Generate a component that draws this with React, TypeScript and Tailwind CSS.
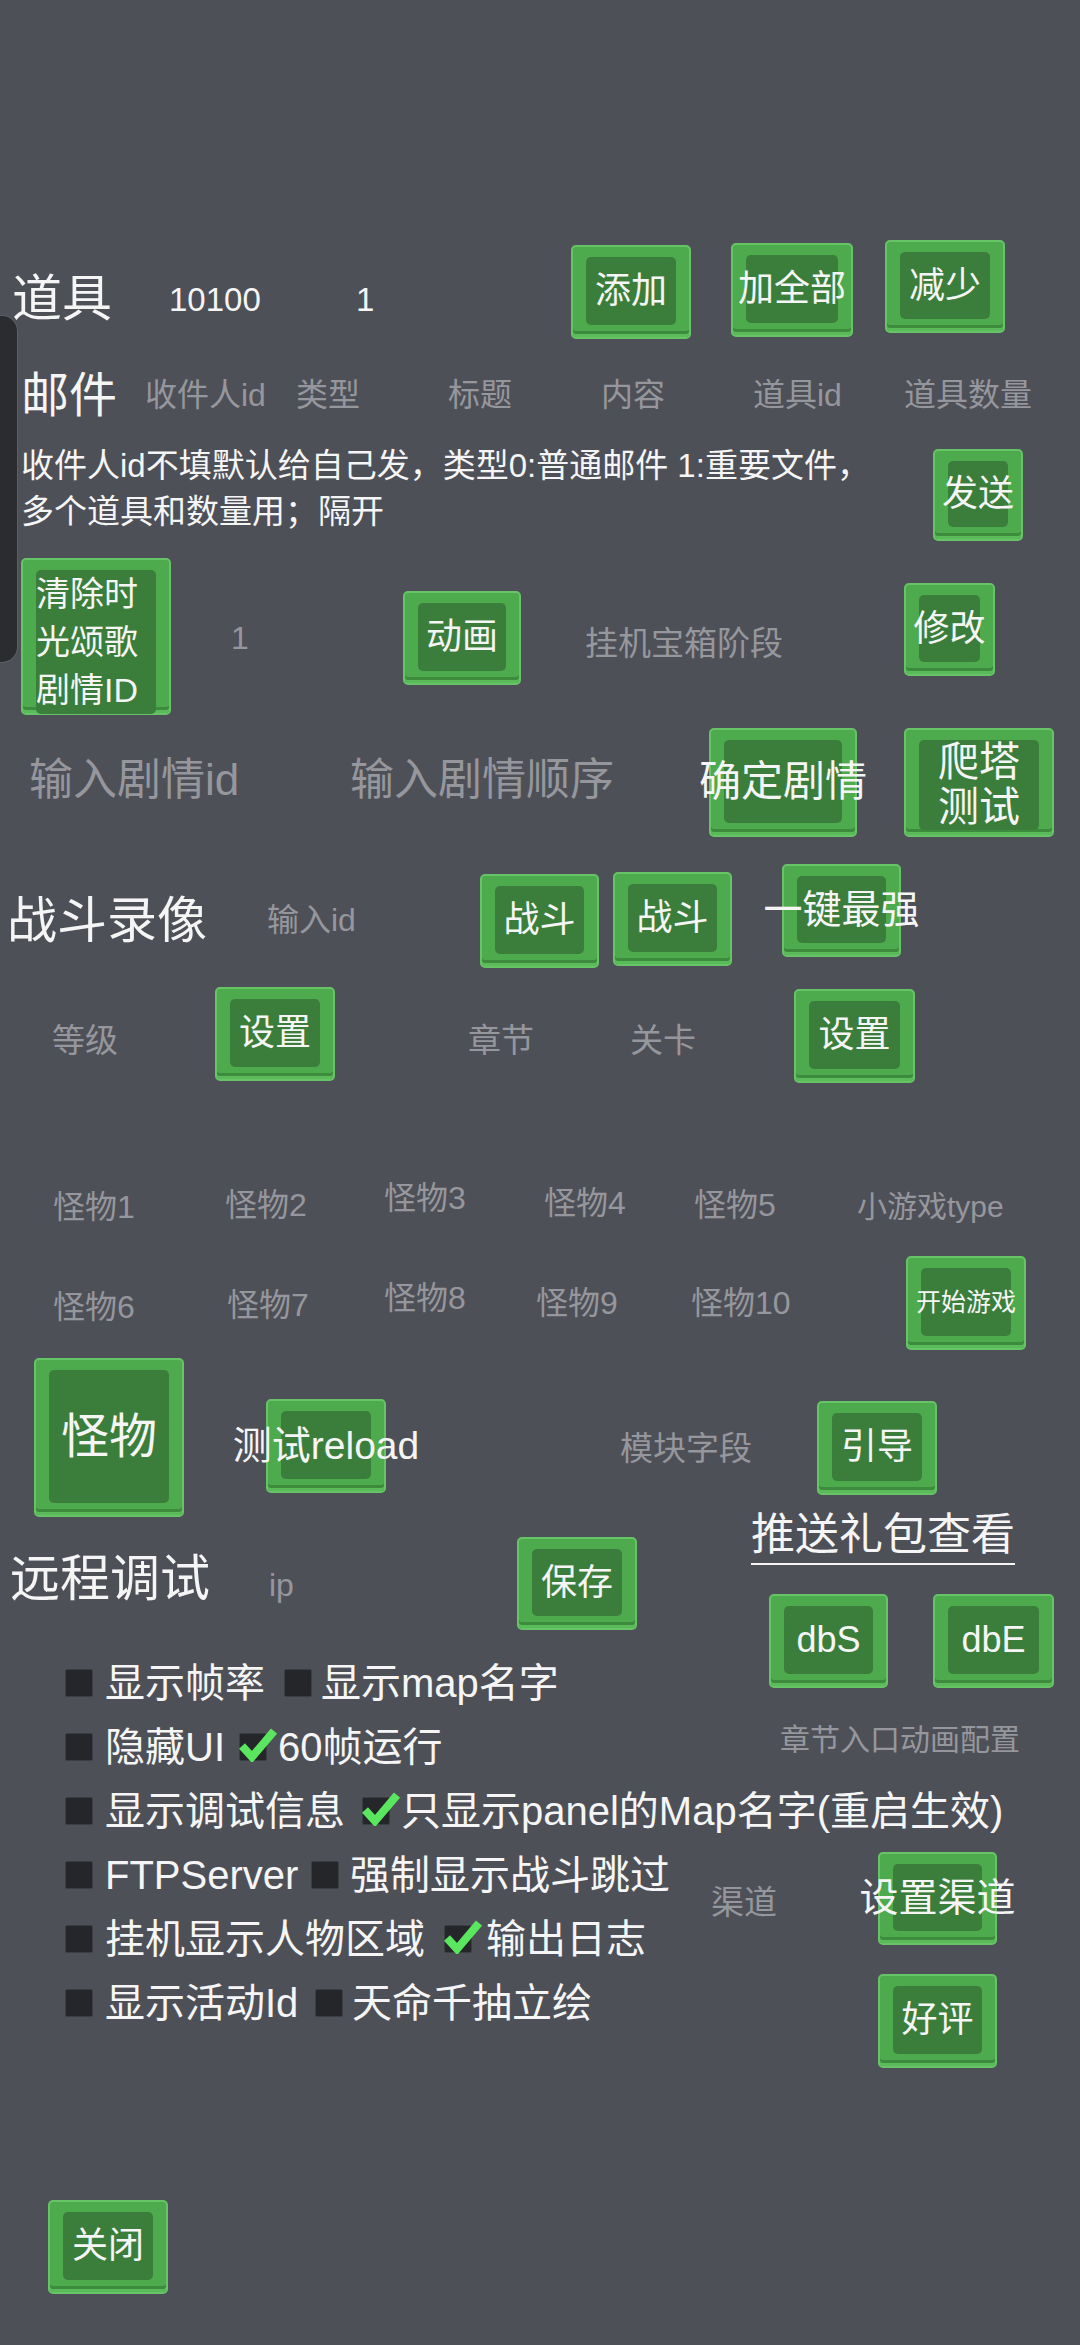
import React from "react";

type BtnProps = {
  className?: string;
  textClass?: string;
  children: React.ReactNode;
};

// green pixel-style game button
const Btn: React.FC<BtnProps> = ({ className = "", textClass = "text-[36px] justify-center", children }) => (
  <div
    className={`shrink-0 flex flex-col rounded-[5px] border-2 border-[#66c466] bg-[#4dab4d] pt-[10px] px-[13px] pb-[12px] shadow-[inset_0_-3px_0_#5bbb5b,inset_0_-6px_0_#3d8b3d] ${className}`}
  >
    <div
      className={`flex flex-1 items-center whitespace-nowrap rounded-[5px] bg-[#3b7e3b] leading-none text-[#f5f5f5] ${textClass}`}
    >
      {children}
    </div>
  </div>
);

const Box: React.FC<{ checked?: boolean }> = ({ checked }) => (
  <div className="relative h-[28px] w-[28px] shrink-0 rounded-[2px] border border-[#3d3e43] bg-[#25262a]">
    {checked && (
      <svg className="absolute left-[-1px] top-[-6px] h-[34px] w-[38px]" viewBox="0 0 38 34">
        <polyline points="3,18 13,29 35,3" fill="none" stroke="#5ae65e" strokeWidth="8" />
      </svg>
    )}
  </div>
);

const gray = "text-[#96979c]";

export default function App() {
  return (
    <div className="relative min-h-[2345px] w-[1080px] overflow-hidden bg-[#4e5058] pt-[238px] text-[#f5f5f5] [font-family:'Liberation_Sans','Noto_Sans_CJK_SC',sans-serif]">
      {/* floating handle on the left edge */}
      <div className="absolute left-0 top-[315px] h-[348px] w-[18px] rounded-r-[16px] border border-l-0 border-[#5d5f66] bg-[#2b2c30]" />

      {/* 道具 */}
      <div className="flex h-[102px] items-start leading-none">
        <div className="ml-[12px] mt-[36px] w-[157px] shrink-0 text-[50px]">道具</div>
        <div className="mt-[45px] w-[187px] shrink-0 text-[33px]">10100</div>
        <div className="mt-[45px] w-[215px] shrink-0 text-[33px]">1</div>
        <Btn className="mt-[7px] h-[94px] w-[120px]">添加</Btn>
        <Btn className="ml-[40px] mt-[5px] h-[94px] w-[122px]">加全部</Btn>
        <Btn className="ml-[32px] mt-[2px] h-[93px] w-[120px]">减少</Btn>
      </div>

      {/* 邮件 */}
      <div className={`flex h-[90px] items-start leading-none text-[32px] ${gray}`}>
        <div className="ml-[21px] mt-[32px] w-[124px] shrink-0 text-[48px] text-[#f5f5f5]">邮件</div>
        <div className="mt-[39px] w-[151px] shrink-0">收件人id</div>
        <div className="mt-[39px] w-[152px] shrink-0">类型</div>
        <div className="mt-[39px] w-[153px] shrink-0">标题</div>
        <div className="mt-[39px] w-[152px] shrink-0">内容</div>
        <div className="mt-[39px] w-[151px] shrink-0">道具id</div>
        <div className="mt-[39px] shrink-0">道具数量</div>
      </div>

      <div className="flex h-[128px] items-start">
        <div className="ml-[21px] mt-[13px] w-[912px] shrink-0 text-[33px] leading-[46px]">
          收件人id不填默认给自己发，类型0:普通邮件 1:重要文件，
          <br />
          多个道具和数量用；隔开
        </div>
        <Btn className="mt-[19px] h-[92px] w-[90px]">发送</Btn>
      </div>

      {/* 剧情 */}
      <div className="flex h-[160px] items-start leading-none">
        <Btn className="ml-[21px] h-[157px] w-[150px]" textClass="justify-start text-[34px]">
          <div className="leading-[48px]">
            清除时
            <br />
            光颂歌
            <br />
            剧情ID
          </div>
        </Btn>
        <div className={`ml-[60px] mt-[64px] w-[172px] shrink-0 text-[32px] ${gray}`}>1</div>
        <Btn className="mt-[33px] h-[94px] w-[118px]">动画</Btn>
        <div className={`ml-[64px] mt-[69px] w-[319px] shrink-0 text-[33px] ${gray}`}>挂机宝箱阶段</div>
        <Btn className="mt-[25px] h-[93px] w-[91px]">修改</Btn>
      </div>

      <div className={`flex h-[124px] items-start leading-none text-[44px] ${gray}`}>
        <div className="ml-[29px] mt-[40px] w-[321px] shrink-0">输入剧情id</div>
        <div className="mt-[40px] w-[359px] shrink-0">输入剧情顺序</div>
        <Btn className="mt-[10px] h-[109px] w-[148px]" textClass="justify-center text-[42px]">
          确定剧情
        </Btn>
        <Btn className="ml-[47px] mt-[10px] h-[109px] w-[150px]" textClass="justify-center text-[41px]">
          <div className="leading-[45px]">
            爬塔
            <br />
            测试
          </div>
        </Btn>
      </div>

      {/* 战斗录像 */}
      <div className="flex h-[130px] items-start leading-none">
        <div className="ml-[7px] mt-[54px] w-[260px] shrink-0 text-[50px]">战斗录像</div>
        <div className={`mt-[62px] w-[213px] shrink-0 text-[32px] ${gray}`}>输入id</div>
        <Btn className="mt-[32px] h-[94px] w-[119px]">战斗</Btn>
        <Btn className="ml-[14px] mt-[30px] h-[94px] w-[119px]">战斗</Btn>
        <Btn className="ml-[50px] mt-[22px] h-[93px] w-[119px]" textClass="justify-center text-[39px]">
          一键最强
        </Btn>
      </div>

      <div className={`flex h-[115px] items-start leading-none text-[33px] ${gray}`}>
        <div className="ml-[52px] mt-[52px] w-[163px] shrink-0">等级</div>
        <Btn className="mt-[15px] h-[94px] w-[120px]">设置</Btn>
        <div className="ml-[133px] mt-[52px] w-[162px] shrink-0">章节</div>
        <div className="mt-[52px] w-[164px] shrink-0">关卡</div>
        <Btn className="mt-[17px] h-[94px] w-[121px]">设置</Btn>
      </div>

      {/* 怪物 */}
      <div className={`flex h-[169px] items-start leading-none text-[32px] ${gray}`}>
        <div className="ml-[53px] mt-[104px] w-[172px] shrink-0">怪物1</div>
        <div className="mt-[102px] w-[159px] shrink-0">怪物2</div>
        <div className="mt-[95px] w-[160px] shrink-0">怪物3</div>
        <div className="mt-[100px] w-[150px] shrink-0">怪物4</div>
        <div className="mt-[102px] w-[163px] shrink-0">怪物5</div>
        <div className="mt-[105px] shrink-0 text-[30px]">小游戏type</div>
      </div>

      <div className={`flex h-[102px] items-start leading-none text-[32px] ${gray}`}>
        <div className="ml-[53px] mt-[35px] w-[174px] shrink-0">怪物6</div>
        <div className="mt-[33px] w-[157px] shrink-0">怪物7</div>
        <div className="mt-[26px] w-[152px] shrink-0">怪物8</div>
        <div className="mt-[31px] w-[155px] shrink-0">怪物9</div>
        <div className="mt-[31px] w-[215px] shrink-0">怪物10</div>
        <Btn className="h-[94px] w-[120px]" textClass="justify-center text-[25px]">
          开始游戏
        </Btn>
      </div>

      <div className="flex h-[150px] items-start leading-none">
        <Btn className="ml-[34px] h-[159px] w-[150px]" textClass="justify-center text-[48px]">
          怪物
        </Btn>
        <Btn className="ml-[82px] mt-[41px] h-[94px] w-[120px]" textClass="justify-center text-[39px]">
          测试reload
        </Btn>
        <div className={`ml-[234px] mt-[74px] w-[197px] shrink-0 text-[33px] ${gray}`}>模块字段</div>
        <Btn className="mt-[43px] h-[94px] w-[120px]">引导</Btn>
      </div>

      {/* 远程调试 + 推送礼包 */}
      <div className="flex h-[271px] leading-none">
        <div className="flex w-[751px] shrink-0 flex-col">
          <div className="flex h-[143px] items-start">
            <div className="ml-[10px] mt-[46px] w-[259px] shrink-0 text-[50px]">远程调试</div>
            <div className={`mt-[61px] w-[248px] shrink-0 text-[32px] ${gray}`}>ip</div>
            <Btn className="mt-[29px] h-[93px] w-[120px]">保存</Btn>
          </div>
          <div className="flex h-[64px] items-center pl-[65px] text-[40px]">
            <Box />
            <div className="ml-[12px] w-[179px] shrink-0">显示帧率</div>
            <Box />
            <div className="ml-[9px]">显示map名字</div>
          </div>
          <div className="flex h-[64px] items-center pl-[65px] text-[40px]">
            <Box />
            <div className="ml-[12px] w-[134px] shrink-0">隐藏UI</div>
            <Box checked />
            <div className="ml-[11px]">60帧运行</div>
          </div>
        </div>
        <div className="flex flex-1 flex-col items-start">
          <div className="mt-[5px] border-b-2 border-[#f5f5f5] pb-[6px] text-[44px] leading-none">推送礼包查看</div>
          <div className="mt-[29px] flex">
            <Btn className="ml-[18px] h-[94px] w-[119px]">dbS</Btn>
            <Btn className="ml-[45px] h-[94px] w-[121px]">dbE</Btn>
          </div>
          <div className={`ml-[29px] mt-[37px] text-[30px] ${gray}`}>章节入口动画配置</div>
        </div>
      </div>

      <div className="flex h-[64px] items-center pl-[65px] text-[40px] leading-none">
        <Box />
        <div className="ml-[12px] w-[257px] shrink-0">显示调试信息</div>
        <Box checked />
        <div className="ml-[11px]">只显示panel的Map名字(重启生效)</div>
      </div>

      {/* checkboxes + 渠道 */}
      <div className="flex h-[225px] leading-none">
        <div className="flex w-[711px] shrink-0 flex-col text-[40px]">
          <div className="flex h-[64px] items-center pl-[65px]">
            <Box />
            <div className="ml-[12px] w-[206px] shrink-0">FTPServer</div>
            <Box />
            <div className="ml-[11px]">强制显示战斗跳过</div>
          </div>
          <div className="flex h-[64px] items-center pl-[65px]">
            <Box />
            <div className="ml-[12px] w-[339px] shrink-0">挂机显示人物区域</div>
            <Box checked />
            <div className="ml-[14px]">输出日志</div>
          </div>
          <div className="flex h-[64px] items-center pl-[65px]">
            <Box />
            <div className="ml-[12px] w-[210px] shrink-0">显示活动Id</div>
            <Box />
            <div className="ml-[9px]">天命千抽立绘</div>
          </div>
        </div>
        <div className="flex flex-1 flex-col">
          <div className="flex items-start">
            <div className={`mt-[43px] w-[167px] shrink-0 text-[33px] ${gray}`}>渠道</div>
            <Btn className="mt-[9px] h-[93px] w-[119px]" textClass="justify-center text-[39px]">
              设置渠道
            </Btn>
          </div>
          <Btn className="ml-[167px] mt-[29px] h-[94px] w-[119px]">好评</Btn>
        </div>
      </div>

      <div className="mt-[132px] flex pl-[48px]">
        <Btn className="h-[94px] w-[120px]">关闭</Btn>
      </div>
    </div>
  );
}
